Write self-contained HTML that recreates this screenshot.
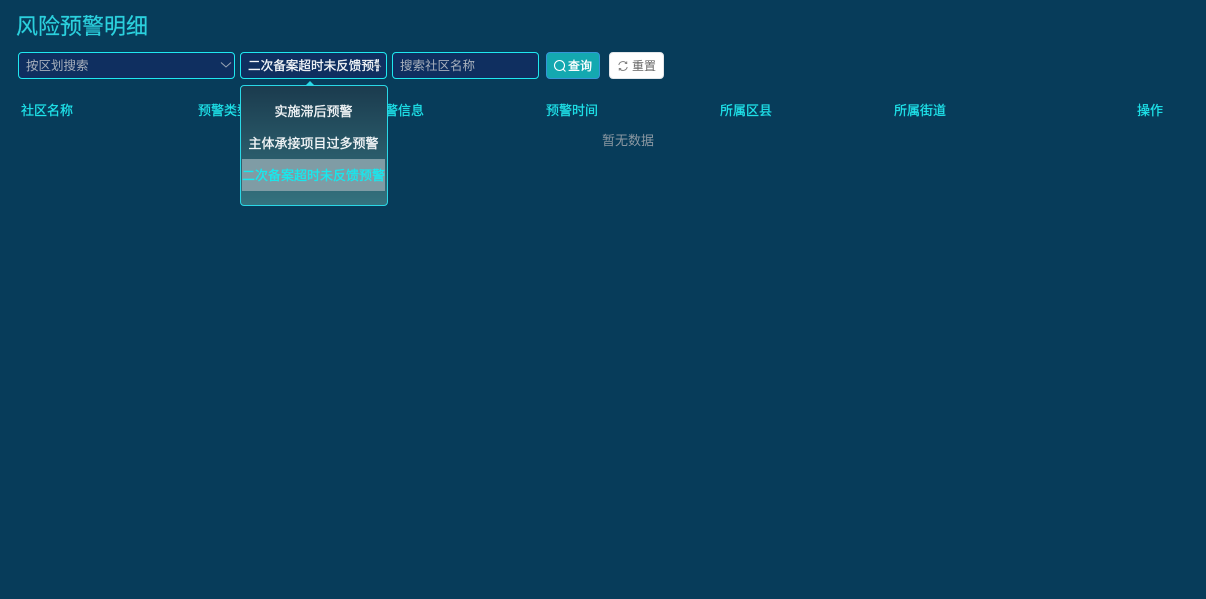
<!DOCTYPE html>
<html lang="zh">
<head>
<meta charset="utf-8">
<title>风险预警明细</title>
<style>
html,body{margin:0;padding:0;width:1206px;height:599px;overflow:hidden;background:#073c5a;}
body{position:relative;font-family:"Liberation Sans","Noto Sans CJK SC",sans-serif;}
div,span{position:absolute;white-space:nowrap;box-sizing:border-box;}
.title{left:16px;top:11px;font-size:22px;line-height:32px;color:#2bd0dd;-webkit-text-stroke:0.2px #2bd0dd;}
.inp{top:52px;height:27px;background:#0f2f60;border:1px solid #1fe8f0;border-radius:4px;font-size:12.5px;line-height:27px;color:#a8b0bc;padding-left:7px;overflow:hidden;}
.th{top:102px;font-size:13px;line-height:18px;color:#1fe3ea;-webkit-text-stroke:0.25px #1fe3ea;}
.pop{left:240px;top:85px;width:148px;height:121px;border:1px solid #2ad8e6;border-radius:4px;background:linear-gradient(180deg,#1b3b4e 0%,#34727e 100%);}
.opt{left:1px;width:143px;height:32px;line-height:32px;text-align:center;font-size:13px;color:#f2f5f7;-webkit-text-stroke:0.35px #f2f5f7;overflow:hidden;}
.btn{top:52px;height:27px;border-radius:4px;font-size:12px;line-height:27px;}
svg{position:absolute;}
</style>
</head>
<body>
<div class="title">风险预警明细</div>

<div class="inp" style="left:18px;width:217px;">按区划搜索</div>
<svg style="left:220px;top:61px" width="12" height="8" viewBox="0 0 12 8"><path d="M1 1.5 L6 6 L11 1.5" fill="none" stroke="#9aa6b4" stroke-width="1"/></svg>

<div class="inp" style="left:240px;width:147px;"><span style="left:7px;top:0;width:131px;overflow:hidden;color:#f2f5f8;font-size:12.6px;-webkit-text-stroke:0.3px #f2f5f8;">二次备案超时未反馈预警</span></div>
<svg style="left:372px;top:62px" width="10" height="6" viewBox="0 0 10 6"><path d="M1 5 L5 1 L9 5" fill="none" stroke="#8c98a6" stroke-width="1"/></svg>

<div class="inp" style="left:392px;width:147px;">搜索社区名称</div>

<div class="btn" style="left:546px;width:54px;background:#14a8b0;border:1px solid #3596d8;color:#fff;padding-left:21px;line-height:26px;-webkit-text-stroke:0.35px #fff;">查询</div>
<svg style="left:553px;top:59px" width="14" height="14" viewBox="0 0 14 14"><circle cx="6.5" cy="6.5" r="5" fill="none" stroke="#fff" stroke-width="1.1"/><path d="M10 10 L12.5 12.5" stroke="#fff" stroke-width="1.1"/></svg>

<div class="btn" style="left:609px;width:55px;background:#fff;border:1px solid #e2e6ea;color:#666;padding-left:22px;line-height:26px;">重置</div>
<svg style="left:617px;top:60px" width="12" height="12" viewBox="0 0 12 12"><path d="M1.8 5 A4.3 4.3 0 0 1 9.4 3.2 M10.2 7 A4.3 4.3 0 0 1 2.6 8.8" fill="none" stroke="#777" stroke-width="0.9"/><path d="M9.8 1.4 V3.6 H7.8 M2.2 10.6 V8.4 H4.2" fill="none" stroke="#777" stroke-width="0.8"/></svg>

<div class="th" style="left:21px;">社区名称</div>
<div class="th" style="left:198px;">预警类型</div>
<div class="th" style="left:372px;">预警信息</div>
<div class="th" style="left:546px;">预警时间</div>
<div class="th" style="left:720px;">所属区县</div>
<div class="th" style="left:894px;">所属街道</div>
<div class="th" style="left:1137px;">操作</div>

<div style="left:602px;top:132px;font-size:13px;line-height:18px;color:#8b98a2;">暂无数据</div>

<svg style="left:305px;top:81px" width="10" height="5" viewBox="0 0 10 5"><path d="M0 5 L5 0 L10 5 Z" fill="#2ad8e6"/></svg>
<div class="pop">
  <div class="opt" style="top:10px;">实施滞后预警</div>
  <div class="opt" style="top:42px;">主体承接项目过多预警</div>
  <div class="opt" style="top:73px;background:#7f9ca5;color:#18e8ee;-webkit-text-stroke:0.35px #18e8ee;line-height:34px;">二次备案超时未反馈预警</div>
</div>
</body>
</html>
